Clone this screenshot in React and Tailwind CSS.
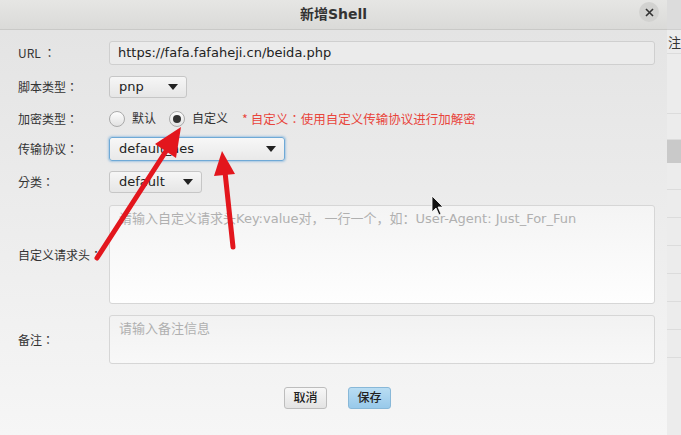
import React from 'react';

const font = { fontFamily: '"DejaVu Sans", "Noto Sans CJK SC", sans-serif' };
const cjk = { fontFamily: '"Noto Sans CJK TC", "DejaVu Sans", sans-serif' };

function Label({ children }) {
  return (
    <div className="w-[109px] shrink-0 pl-[18px] text-[12px] text-[#333]" style={cjk}>
      {children}
    </div>
  );
}

function Select({ value, width, focused }) {
  return (
    <div
      className={`flex h-full items-center justify-between rounded-[3px] border pl-[9px] pr-[8px] text-[13px] text-[#222] ${
        focused
          ? 'border-[#6fa9d6] bg-gradient-to-b from-[#f7f7f7] to-[#e9e9e9] shadow-[0_0_2px_1px_rgba(120,175,220,0.6)]'
          : 'border-[#c6c6c6] bg-gradient-to-b from-[#f6f6f6] to-[#e6e6e6]'
      }`}
      style={{ width }}
    >
      <span>{value}</span>
      <svg width="10" height="6" viewBox="0 0 10 6">
        <path d="M0 0 L10 0 L5 6 Z" fill="#222" />
      </svg>
    </div>
  );
}

function Radio({ checked }) {
  return (
    <div className="flex h-[16px] w-[16px] items-center justify-center rounded-full border border-[#aaa] bg-gradient-to-b from-[#fdfdfd] to-[#e2e2e2]">
      {checked && <div className="h-[8px] w-[8px] rounded-full bg-[#333]" />}
    </div>
  );
}

export default function App() {
  return (
    <div className="relative flex h-[435px] w-[681px] overflow-hidden bg-[#e8e8e8]" style={font}>
      <div className="flex w-[667px] shrink-0 flex-col shadow-[2px_0_3px_rgba(0,0,0,0.15)]">
        <div className="relative flex h-[30px] shrink-0 items-center justify-center border-b border-[#c9c9c7] bg-gradient-to-b from-[#e6e6e4] to-[#dadad8]">
          <span className="text-[14px] font-bold text-[#333]">新增Shell</span>
          <div className="absolute right-[8px] top-[2px] flex h-[20px] w-[20px] items-center justify-center rounded-full bg-[#d2d2d0]">
            <svg width="9" height="9" viewBox="0 0 9 9">
              <path d="M1 1 L8 8 M8 1 L1 8" stroke="#333" strokeWidth="1.6" />
            </svg>
          </div>
        </div>
        <div className="flex flex-1 flex-col bg-gradient-to-b from-[#e4e4e4] to-[#f6f6f6] pt-[11px] pr-[12px]">
          <div className="flex h-[24px] items-center">
            <Label>URL ：</Label>
            <div className="flex h-full flex-1 items-center rounded-[3px] border border-[#cfcfcf] bg-[#ebebeb] pl-[8px] text-[13px] text-[#222]">
              https://fafa.fafaheji.cn/beida.php
            </div>
          </div>
          <div className="mt-[11px] flex h-[22px] items-center">
            <Label>脚本类型：</Label>
            <Select value="pnp" width={78} />
          </div>
          <div className="mt-[11px] flex h-[20px] items-center">
            <Label>加密类型：</Label>
            <div className="flex items-center gap-[7px]">
              <Radio />
              <span className="text-[12px] text-[#333]">默认</span>
            </div>
            <div className="ml-[13px] flex items-center gap-[7px]">
              <Radio checked />
              <span className="text-[12px] text-[#333]">自定义</span>
            </div>
            <span className="ml-[14px] text-[12.5px] text-[#e8453c]" style={cjk}>
              * 自定义：使用自定义传输协议进行加解密
            </span>
          </div>
          <div className="mt-[8px] flex h-[24px] items-center">
            <Label>传输协议：</Label>
            <Select value="default_aes" width={176} focused />
          </div>
          <div className="mt-[10px] flex h-[22px] items-center">
            <Label>分类：</Label>
            <Select value="default" width={93} />
          </div>
          <div className="mt-[12px] flex h-[99px] items-center">
            <Label>自定义请求头：</Label>
            <div className="h-full flex-1 rounded-[3px] border border-[#d6d6d6] bg-gradient-to-b from-[#f4f4f4] to-[#fefefe] px-[9px] pt-[3px] text-[13px] text-[#b0b0b0]">
              请输入自定义请求头Key:value对，一行一个，如：User-Agent: Just_For_Fun
            </div>
          </div>
          <div className="mt-[11px] flex h-[49px] items-center">
            <Label>备注：</Label>
            <div className="h-full flex-1 rounded-[3px] border border-[#d6d6d6] bg-gradient-to-b from-[#f2f2f2] to-[#f8f8f8] px-[9px] pt-[3px] text-[13px] text-[#b0b0b0]">
              请输入备注信息
            </div>
          </div>
          <div className="mt-[23px] flex h-[22px] justify-center gap-[21px] pl-[20px]">
            <div className="flex w-[43px] items-center justify-center rounded-[3px] border border-[#bdbdbd] bg-gradient-to-b from-[#f7f7f7] to-[#e3e3e3] text-[12px] font-medium text-[#222]">
              取消
            </div>
            <div className="flex w-[43px] items-center justify-center rounded-[3px] border border-[#88b8d8] bg-gradient-to-b from-[#b9ddf3] to-[#98c9ea] text-[12px] font-medium text-[#222]">
              保存
            </div>
          </div>
        </div>
      </div>
      <div className="flex flex-1 flex-col bg-[#ececec]">
        <div className="h-[30px] border-b border-[#cfcfcf] bg-[#dcdcdc]" />
        <div className="h-[24px] border-b border-[#dcdcdc] pl-[1px] text-[13px] leading-[24px] text-[#333]" style={cjk}>注</div>
        <div className="h-[60px] border-b border-[#dcdcdc]" />
        <div className="h-[26px] border-b border-[#dcdcdc]" />
        <div className="h-[23px] bg-[#c9c9c9]" />
        <div className="h-[27px] border-b border-[#dcdcdc]" />
        <div className="h-[28px] border-b border-[#dcdcdc]" />
        <div className="h-[28px] border-b border-[#dcdcdc]" />
        <div className="h-[28px] border-b border-[#dcdcdc]" />
        <div className="h-[28px] border-b border-[#dcdcdc]" />
        <div className="h-[28px] border-b border-[#dcdcdc]" />
        <div className="h-[28px] border-b border-[#dcdcdc]" />
      </div>
      <svg className="pointer-events-none absolute left-0 top-0" width="681" height="435" viewBox="0 0 681 435">
        <line x1="97" y1="258" x2="168" y2="148" stroke="#e3161d" strokeWidth="5" strokeLinecap="round" />
        <polygon points="181,127 176,158 155,144" fill="#e3161d" />
        <line x1="233" y1="247" x2="225" y2="172" stroke="#e3161d" strokeWidth="5" strokeLinecap="round" />
        <polygon points="222,151 235,174 214,176" fill="#e3161d" />
        <path d="M432 196 L432 212 L436 208 L439 215 L441 214 L438 207 L443 207 Z" fill="#111" stroke="#fff" strokeWidth="0.8" />
      </svg>
    </div>
  );
}
